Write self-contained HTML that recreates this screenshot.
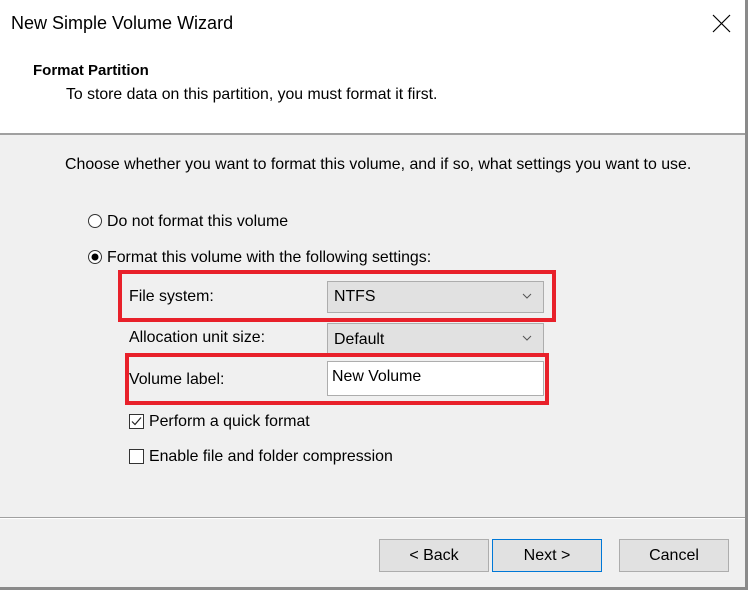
<!DOCTYPE html><html><head><style>
body{margin:0;width:748px;height:590px;overflow:hidden;background:#f0f0f0;font-family:"Liberation Sans",sans-serif;font-size:15.9px;color:#000;position:relative}
.a{position:absolute;white-space:nowrap}
.hdr{position:absolute;left:0;top:0;width:745px;height:133px;background:#fff}
.btn{position:absolute;top:539px;width:108px;height:31px;background:#e1e1e1;border:1px solid #adadad;text-align:center;line-height:31px;font-size:16px}
.red{position:absolute;border:4px solid #e8202a}
.combo{position:absolute;left:327px;width:215px;background:#e1e1e1;border:1px solid #adadad}
</style></head><body>
<div class="hdr"></div>
<div class="a" style="left:11px;top:13px;font-size:18px">New Simple Volume Wizard</div>
<div class="a" style="left:710px;top:6px;font-size:24px;font-weight:100">
<svg width="20" height="20" style="position:absolute;left:2px;top:8px"><path d="M1 1L18 18M18 1L1 18" stroke="#000" stroke-width="1.2"/></svg></div>
<div class="a" style="left:33px;top:62px;font-weight:bold;font-size:15px">Format Partition</div>
<div class="a" style="left:66px;top:86px;font-size:15.8px">To store data on this partition, you must format it first.</div>
<div class="a" style="left:0;top:133px;width:745px;height:2px;background:#a0a0a0"></div>
<div class="a" style="left:745px;top:0;width:3px;height:590px;background:#8a8a8a"></div>
<div class="a" style="left:65px;top:156px">Choose whether you want to format this volume, and if so, what settings you want to use.</div>
<svg class="a" style="left:87px;top:213px" width="16" height="16"><circle cx="8" cy="8" r="6.5" fill="#fff" stroke="#333"/></svg>
<div class="a" style="left:107px;top:213px">Do not format this volume</div>
<svg class="a" style="left:87px;top:249px" width="16" height="16"><circle cx="8" cy="8" r="6.5" fill="#fff" stroke="#333"/><circle cx="8" cy="8" r="3.5" fill="#000"/></svg>
<div class="a" style="left:107px;top:249px">Format this volume with the following settings:</div>
<div class="a" style="left:129px;top:288px">File system:</div>
<div class="combo" style="top:281px;height:30px"><span class="a" style="left:6px;top:6px">NTFS</span></div>
<div class="a" style="left:129px;top:329px">Allocation unit size:</div>
<div class="combo" style="top:323px;height:29px"><span class="a" style="left:6px;top:7px">Default</span></div>
<svg class="a" style="left:522px;top:292px" width="10" height="8"><path d="M1 2L5 6L9 2" stroke="#555" fill="none"/></svg>
<svg class="a" style="left:522px;top:334px" width="10" height="8"><path d="M1 2L5 6L9 2" stroke="#555" fill="none"/></svg>
<div class="a" style="left:129px;top:371px">Volume label:</div>
<div class="a" style="left:327px;top:361px;width:215px;height:33px;background:#fff;border:1px solid #adadad"><span class="a" style="left:4px;top:6px">New Volume</span></div>
<div class="red" style="left:118px;top:270px;width:430px;height:44px"></div>
<div class="red" style="left:125px;top:353px;width:416px;height:44px"></div>
<svg class="a" style="left:129px;top:414px" width="15" height="15"><rect x=".5" y=".5" width="14" height="14" fill="#fff" stroke="#333"/><path d="M3 7.5L6 10.5L12 3.5" stroke="#222" fill="none" stroke-width="1.2"/></svg>
<div class="a" style="left:149px;top:413px">Perform a quick format</div>
<svg class="a" style="left:129px;top:449px" width="15" height="15"><rect x=".5" y=".5" width="14" height="14" fill="#fff" stroke="#333"/></svg>
<div class="a" style="left:149px;top:448px">Enable file and folder compression</div>
<div class="a" style="left:0;top:517px;width:745px;height:1px;background:#a0a0a0"></div>
<div class="a" style="left:0;top:518px;width:745px;height:1px;background:#fff"></div>
<div class="btn" style="left:379px">&lt; Back</div>
<div class="btn" style="left:492px;border-color:#0078d7">Next &gt;</div>
<div class="btn" style="left:619px">Cancel</div>
<div class="a" style="left:0;top:587px;width:748px;height:3px;background:#8a8a8a"></div>
</body></html>
